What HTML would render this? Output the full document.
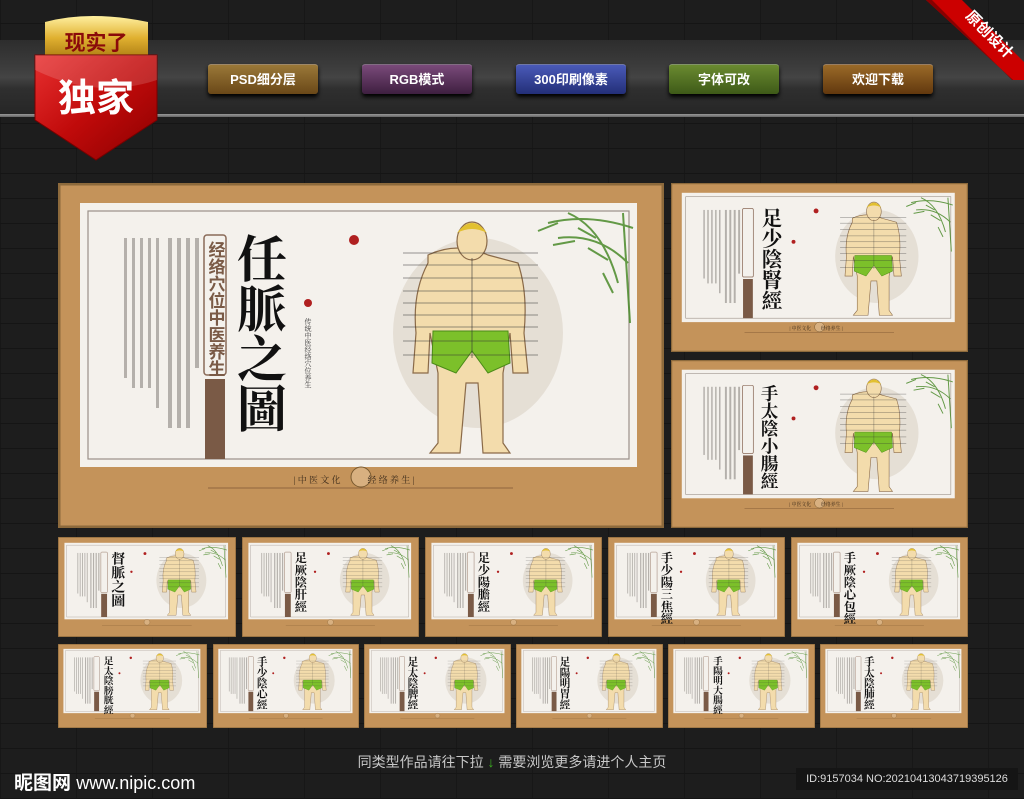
<!DOCTYPE html>
<html><head><meta charset="utf-8">
<style>
*{margin:0;padding:0;box-sizing:border-box}
body{width:1024px;height:799px;overflow:hidden;position:relative;font-family:"Liberation Sans","Noto Sans CJK SC",sans-serif;
background-color:#1d1d1d;
background-image:
repeating-linear-gradient(0deg,#151515 0 1px,transparent 1px 25px),
repeating-linear-gradient(90deg,#171717 0 1px,transparent 1px 76px);}
.band{position:absolute;left:0;top:40px;width:1024px;height:75px;background:linear-gradient(#2d2d2d,#3c3c3c 35%,#444 50%,#2f2f2f 65%,#262626)}
.line{position:absolute;left:0;top:114px;width:1024px;height:3px;background:linear-gradient(#999,#666)}
.btn{position:absolute;top:64px;width:110px;height:30px;border-radius:3px;color:#fff;font-size:13px;font-weight:bold;text-align:center;line-height:30px;box-shadow:0 3px 4px #000;border-top:1px solid rgba(255,255,255,.35)}
.ab{position:absolute}
.ab svg{width:100%;height:100%;display:block}
.foot{position:absolute;top:752px;left:0;width:1024px;text-align:center;color:#c8c8c8;font-size:14px}
</style></head><body>
<div class="band"></div><div class="line"></div>

<!-- badge -->
<svg style="position:absolute;left:30px;top:10px" width="132" height="155" viewBox="0 0 132 155">
<defs><linearGradient id="gd" x1="0" y1="0" x2="0" y2="1"><stop offset="0" stop-color="#fff0a0"/><stop offset=".5" stop-color="#e0b030"/><stop offset="1" stop-color="#a87810"/></linearGradient>
<linearGradient id="rd" x1="0" y1="0" x2="1" y2="1"><stop offset="0" stop-color="#e83030"/><stop offset=".5" stop-color="#c00a0a"/><stop offset="1" stop-color="#8a0000"/></linearGradient></defs>
<path d="M15 12 Q60 0 118 12 L118 50 L15 50Z" fill="url(#gd)"/>
<text x="66" y="40" text-anchor="middle" font-size="21" font-weight="bold" fill="#8a0a0a" font-family="Liberation Sans,Noto Sans CJK SC,sans-serif">现实了</text>
<path d="M5 45 L127 45 L127 110 L66 150 L5 110Z" fill="url(#rd)" stroke="#700" stroke-width="1"/>
<path d="M5 45 L127 45 L127 70 Q66 90 5 60Z" fill="#fff" opacity=".15"/>
<text x="66" y="101" text-anchor="middle" font-size="38" font-weight="bold" fill="#fff" font-family="Liberation Sans,Noto Sans CJK SC,sans-serif">独家</text>
</svg>

<div class="btn" style="left:208px;background:linear-gradient(#9a7838,#6a4818)">PSD细分层</div>
<div class="btn" style="left:362px;background:linear-gradient(#7a4a7a,#3e1f40)">RGB模式</div>
<div class="btn" style="left:516px;background:linear-gradient(#4a5ab8,#232f78)">300印刷像素</div>
<div class="btn" style="left:669px;background:linear-gradient(#6a8a30,#3e5a18)">字体可改</div>
<div class="btn" style="left:823px;background:linear-gradient(#9a6a28,#62380e)">欢迎下载</div>

<!-- ribbon -->
<svg style="position:absolute;left:904px;top:0" width="120" height="80" viewBox="0 0 120 80">
<path d="M22 0 L58 0 L120 62 L120 90 Z" fill="#c00"/>
<path d="M22 0 L28 0 L120 92 L120 90Z" fill="#800"/>
<text transform="translate(82,38) rotate(45)" text-anchor="middle" font-size="15" font-weight="bold" fill="#fff" font-family="Liberation Sans,Noto Sans CJK SC,sans-serif">原创设计</text>
</svg>

<svg width="0" height="0" style="position:absolute">
<defs>
<symbol id="base" viewBox="0 0 606 345">
<rect x="0" y="0" width="606" height="345" fill="#c4935a"/>
<rect x="1" y="1" width="604" height="343" fill="none" stroke="#8d6a3c" stroke-width="3"/>
<rect x="22" y="20" width="557" height="264" fill="#f4f1ec"/>
<rect x="30" y="28" width="541" height="248" fill="none" stroke="#9a9088" stroke-width="1.2"/>
<g fill="#8a8680" opacity=".6">
<rect x="66" y="55" width="3" height="140"/><rect x="74" y="55" width="3" height="150"/><rect x="82" y="55" width="3" height="150"/><rect x="90" y="55" width="3" height="150"/><rect x="98" y="55" width="3" height="170"/>
<rect x="110" y="55" width="4" height="190"/><rect x="119" y="55" width="4" height="190"/><rect x="128" y="55" width="4" height="190"/><rect x="137" y="55" width="4" height="130"/>
</g>
<rect x="146" y="52" width="22" height="140" fill="none" stroke="#8a6a58" stroke-width="1.5" rx="3"/>
<rect x="147" y="196" width="20" height="80" fill="#7a5a46"/>
<ellipse cx="420" cy="150" rx="85" ry="95" fill="#d8d0c2" opacity=".55"/>
<g stroke="#4a8a2a" stroke-width="2" fill="none" opacity=".85">
<path d="M490 40 Q530 30 575 45"/><path d="M500 55 Q540 50 570 80"/><path d="M510 30 Q545 45 560 100"/><path d="M565 30 L572 140"/>
<path d="M480 48 l20 -8 M495 62 l22 -4 M520 45 l18 10 M530 65 l20 12 M545 90 l10 20"/>
</g>
<!-- figure -->
<path d="M370 72 Q400 58 430 72 L460 80 Q470 110 466 150 L470 190 L455 190 L452 150 L445 190 L445 260 L452 270 L425 270 L420 200 L408 200 L402 270 L372 270 L380 260 L380 190 L372 150 L370 190 L355 190 L358 150 Q354 110 370 80Z" fill="#f3dcac" stroke="#8a6a48" stroke-width="1.2"/>
<ellipse cx="414" cy="58" rx="15" ry="19" fill="#f3dcac" stroke="#8a6a48" stroke-width="1.2"/>
<path d="M399 50 Q414 30 429 50 Q414 42 399 50Z" fill="#e2c030"/>
<path d="M375 148 L450 148 L452 180 L430 190 L414 168 L398 190 L374 180Z" fill="#7cc02a" stroke="#4a8a18" stroke-width="1"/>
<g stroke="#333" stroke-width=".6">
<path d="M414 75 V175"/><path d="M345 70 H480 M345 82 H480 M345 95 H480 M345 108 H480 M345 120 H480 M345 132 H480 M345 144 H480 M345 158 H480 M345 172 H480"/>
</g>
<circle cx="296" cy="57" r="5" fill="#b02020"/>
<circle cx="250" cy="120" r="4" fill="#b02020"/>
<path d="M150 305 H455" stroke="#5a3a20" stroke-width=".6"/>
<circle cx="303" cy="294" r="10" fill="#d8b080" stroke="#7a5a30"/>
</symbol>
</defs>
</svg>

<!-- main poster -->
<div class="ab" style="left:58px;top:183px;width:606px;height:345px">
<svg viewBox="0 0 606 345" preserveAspectRatio="none"><use href="#base"/>
<text x="157" y="58" style="writing-mode:vertical-rl" font-size="17" fill="#7a5a46" font-weight="bold" font-family="Liberation Sans,Noto Sans CJK SC,sans-serif">经络穴位中医养生</text>
<text x="200" y="50" style="writing-mode:vertical-rl" font-size="50" font-weight="bold" fill="#111" font-family="Liberation Serif,Noto Serif CJK SC,serif">任脈之圖</text>
<text x="250" y="135" style="writing-mode:vertical-rl" font-size="7" fill="#333" font-family="Liberation Serif,Noto Serif CJK SC,serif">传统中医经络穴位养生</text>
<text x="296" y="300" text-anchor="middle" font-size="9" fill="#3a2a1a" font-family="Liberation Serif,Noto Serif CJK SC,serif">| 中 医 文 化　　　经 络 养 生 |</text>
</svg></div>

<!-- right column -->
<div class="ab" style="left:671px;top:183px;width:297px;height:169px">
<svg viewBox="0 0 606 345" preserveAspectRatio="none"><use href="#base"/>
<text x="200" y="50" style="writing-mode:vertical-rl" font-size="42" font-weight="bold" fill="#111" font-family="Liberation Serif,Noto Serif CJK SC,serif">足少陰腎經</text>
<text x="296" y="300" text-anchor="middle" font-size="10" fill="#3a2a1a" font-family="Liberation Serif,Noto Serif CJK SC,serif">| 中医文化　　经络养生 |</text></svg></div>
<div class="ab" style="left:671px;top:360px;width:297px;height:168px">
<svg viewBox="0 0 606 345" preserveAspectRatio="none"><use href="#base"/>
<text x="200" y="50" style="writing-mode:vertical-rl" font-size="36" font-weight="bold" fill="#111" font-family="Liberation Serif,Noto Serif CJK SC,serif">手太陰小腸經</text>
<text x="296" y="300" text-anchor="middle" font-size="10" fill="#3a2a1a" font-family="Liberation Serif,Noto Serif CJK SC,serif">| 中医文化　　经络养生 |</text></svg></div>

<!-- row 2 -->
<div class="ab" style="left:58px;top:537px;width:178px;height:100px"><svg viewBox="0 0 606 345" preserveAspectRatio="none"><use href="#base"/><text x="200" y="50" style="writing-mode:vertical-rl" font-size="48" font-weight="bold" fill="#111" font-family="Liberation Serif,Noto Serif CJK SC,serif">督脈之圖</text></svg></div>
<div class="ab" style="left:242px;top:537px;width:177px;height:100px"><svg viewBox="0 0 606 345" preserveAspectRatio="none"><use href="#base"/><text x="200" y="50" style="writing-mode:vertical-rl" font-size="42" font-weight="bold" fill="#111" font-family="Liberation Serif,Noto Serif CJK SC,serif">足厥陰肝經</text></svg></div>
<div class="ab" style="left:425px;top:537px;width:177px;height:100px"><svg viewBox="0 0 606 345" preserveAspectRatio="none"><use href="#base"/><text x="200" y="50" style="writing-mode:vertical-rl" font-size="42" font-weight="bold" fill="#111" font-family="Liberation Serif,Noto Serif CJK SC,serif">足少陽膽經</text></svg></div>
<div class="ab" style="left:608px;top:537px;width:177px;height:100px"><svg viewBox="0 0 606 345" preserveAspectRatio="none"><use href="#base"/><text x="200" y="50" style="writing-mode:vertical-rl" font-size="42" font-weight="bold" fill="#111" font-family="Liberation Serif,Noto Serif CJK SC,serif">手少陽三焦經</text></svg></div>
<div class="ab" style="left:791px;top:537px;width:177px;height:100px"><svg viewBox="0 0 606 345" preserveAspectRatio="none"><use href="#base"/><text x="200" y="50" style="writing-mode:vertical-rl" font-size="42" font-weight="bold" fill="#111" font-family="Liberation Serif,Noto Serif CJK SC,serif">手厥陰心包經</text></svg></div>

<!-- row 3 -->
<div class="ab" style="left:58px;top:644px;width:149px;height:84px"><svg viewBox="0 0 606 345" preserveAspectRatio="none"><use href="#base"/><text x="200" y="50" style="writing-mode:vertical-rl" font-size="40" font-weight="bold" fill="#111" font-family="Liberation Serif,Noto Serif CJK SC,serif">足太陰膀胱經</text></svg></div>
<div class="ab" style="left:213px;top:644px;width:146px;height:84px"><svg viewBox="0 0 606 345" preserveAspectRatio="none"><use href="#base"/><text x="200" y="50" style="writing-mode:vertical-rl" font-size="44" font-weight="bold" fill="#111" font-family="Liberation Serif,Noto Serif CJK SC,serif">手少陰心經</text></svg></div>
<div class="ab" style="left:364px;top:644px;width:147px;height:84px"><svg viewBox="0 0 606 345" preserveAspectRatio="none"><use href="#base"/><text x="200" y="50" style="writing-mode:vertical-rl" font-size="44" font-weight="bold" fill="#111" font-family="Liberation Serif,Noto Serif CJK SC,serif">足太陰脾經</text></svg></div>
<div class="ab" style="left:516px;top:644px;width:147px;height:84px"><svg viewBox="0 0 606 345" preserveAspectRatio="none"><use href="#base"/><text x="200" y="50" style="writing-mode:vertical-rl" font-size="44" font-weight="bold" fill="#111" font-family="Liberation Serif,Noto Serif CJK SC,serif">足陽明胃經</text></svg></div>
<div class="ab" style="left:668px;top:644px;width:147px;height:84px"><svg viewBox="0 0 606 345" preserveAspectRatio="none"><use href="#base"/><text x="200" y="50" style="writing-mode:vertical-rl" font-size="40" font-weight="bold" fill="#111" font-family="Liberation Serif,Noto Serif CJK SC,serif">手陽明大腸經</text></svg></div>
<div class="ab" style="left:820px;top:644px;width:148px;height:84px"><svg viewBox="0 0 606 345" preserveAspectRatio="none"><use href="#base"/><text x="200" y="50" style="writing-mode:vertical-rl" font-size="44" font-weight="bold" fill="#111" font-family="Liberation Serif,Noto Serif CJK SC,serif">手太陰肺經</text></svg></div>

<div class="foot">同类型作品请往下拉 <span style="color:#3cb020;font-weight:bold">&#8595;</span> 需要浏览更多请进个人主页</div>
<div style="position:absolute;left:14px;top:768px;color:#fff;font-size:19px;font-weight:bold">昵图网 <span style="font-weight:normal;font-size:18px">www.nipic.com</span></div>
<div style="position:absolute;left:796px;top:768px;width:222px;height:22px;background:#151515;color:#ddd;font-size:11px;line-height:22px;text-align:center">ID:9157034 NO:20210413043719395126</div>
</body></html>
